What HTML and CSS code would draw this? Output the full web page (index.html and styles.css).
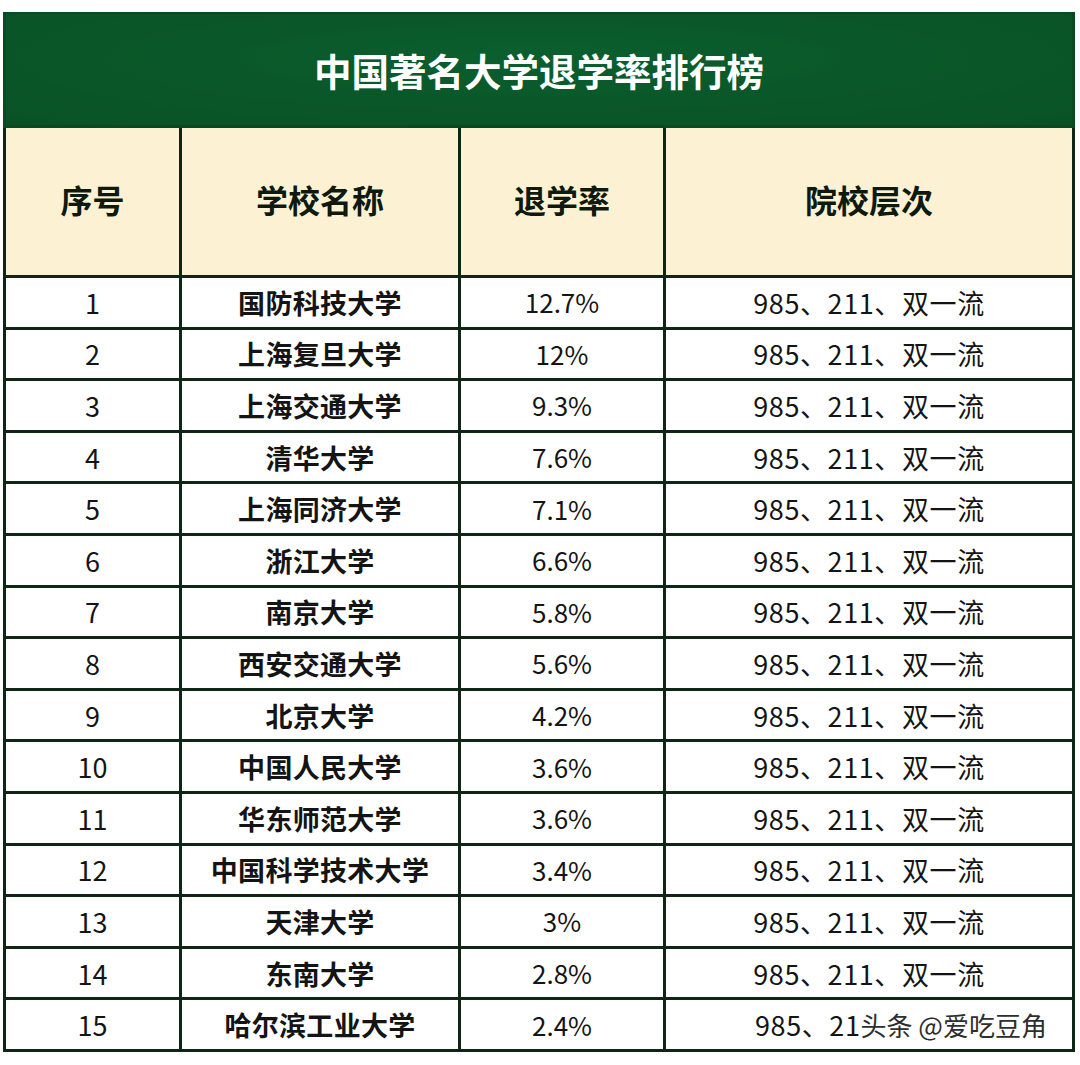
FILE: index.html
```html
<!DOCTYPE html>
<html lang="zh-CN">
<head>
<meta charset="utf-8">
<title>中国著名大学退学率排行榜</title>
<link rel="stylesheet" href="styles.css">
</head>
<body>
<div class="page">
  <table class="rank">
    <colgroup>
      <col class="c1"><col class="c2"><col class="c3"><col class="c4">
    </colgroup>
    <thead>
      <tr class="title-row"><th colspan="4" class="title">中国著名大学退学率排行榜</th></tr>
      <tr class="head-row">
        <th>序号</th><th>学校名称</th><th>退学率</th><th>院校层次</th>
      </tr>
    </thead>
    <tbody>
      <tr><td>1</td><td class="name">国防科技大学</td><td class="pct">12.7%</td><td class="tier">985、211、双一流</td></tr>
      <tr><td>2</td><td class="name">上海复旦大学</td><td class="pct">12%</td><td class="tier">985、211、双一流</td></tr>
      <tr><td>3</td><td class="name">上海交通大学</td><td class="pct">9.3%</td><td class="tier">985、211、双一流</td></tr>
      <tr><td>4</td><td class="name">清华大学</td><td class="pct">7.6%</td><td class="tier">985、211、双一流</td></tr>
      <tr><td>5</td><td class="name">上海同济大学</td><td class="pct">7.1%</td><td class="tier">985、211、双一流</td></tr>
      <tr><td>6</td><td class="name">浙江大学</td><td class="pct">6.6%</td><td class="tier">985、211、双一流</td></tr>
      <tr><td>7</td><td class="name">南京大学</td><td class="pct">5.8%</td><td class="tier">985、211、双一流</td></tr>
      <tr><td>8</td><td class="name">西安交通大学</td><td class="pct">5.6%</td><td class="tier">985、211、双一流</td></tr>
      <tr><td>9</td><td class="name">北京大学</td><td class="pct">4.2%</td><td class="tier">985、211、双一流</td></tr>
      <tr><td>10</td><td class="name">中国人民大学</td><td class="pct">3.6%</td><td class="tier">985、211、双一流</td></tr>
      <tr><td>11</td><td class="name">华东师范大学</td><td class="pct">3.6%</td><td class="tier">985、211、双一流</td></tr>
      <tr><td>12</td><td class="name">中国科学技术大学</td><td class="pct">3.4%</td><td class="tier">985、211、双一流</td></tr>
      <tr><td>13</td><td class="name">天津大学</td><td class="pct">3%</td><td class="tier">985、211、双一流</td></tr>
      <tr><td>14</td><td class="name">东南大学</td><td class="pct">2.8%</td><td class="tier">985、211、双一流</td></tr>
      <tr><td>15</td><td class="name">哈尔滨工业大学</td><td class="pct">2.4%</td><td class="tier last">985、21<span class="watermark">头条 @爱吃豆角</span></td></tr>
    </tbody>
  </table>
</div>
</body>
</html>
```

FILE: styles.css
```css
html, body {
  margin: 0;
  padding: 0;
  background: #ffffff;
}

.page {
  padding: 12px 0 0 3px;
}

.rank {
  width: 1069px;
  table-layout: fixed;
  border-collapse: collapse;
  font-family: "Noto Sans CJK SC", "Noto Sans", sans-serif;
  color: #141414;
}

.c1 { width: 176px; }
.c2 { width: 279px; }
.c3 { width: 205px; }
.c4 { width: 409px; }

.rank th,
.rank td {
  border: 3px solid #0f2617;
  text-align: center;
  vertical-align: middle;
  padding: 0;
}

.title-row th.title {
  height: 111px;
  background: radial-gradient(ellipse at 50% 40%, #0b5f2f 0%, #0a5829 45%, #095226 100%);
  color: #ffffff;
  font-size: 37.5px;
  font-weight: 700;
  border-color: #0a4a22;
  border-width: 2px 3px 3px 3px;
}

.head-row th {
  height: 141px;
  padding-bottom: 6px;
  background: #fcf2d3;
  color: #0e1a10;
  font-size: 32px;
  font-weight: 700;
}

.rank tbody td {
  height: 48.6px;
  font-size: 27px;
  font-weight: 400;
  line-height: 1;
  background: #ffffff;
}

.rank tbody td.name {
  font-weight: 700;
  letter-spacing: 0.3px;
}

.rank tbody td.pct {
  font-size: 26px;
}

.rank tbody td.tier {
  letter-spacing: 0.6px;
}

.rank tbody td.last {
  text-align: left;
  padding-left: 89px;
  white-space: nowrap;
}

.watermark {
  font-size: 26px;
  font-weight: 400;
  color: #2e2e2e;
  letter-spacing: 0;
  text-shadow:
    -1px -1px 0 #ffffff, 1px -1px 0 #ffffff,
    -1px 1px 0 #ffffff, 1px 1px 0 #ffffff;
}
```
